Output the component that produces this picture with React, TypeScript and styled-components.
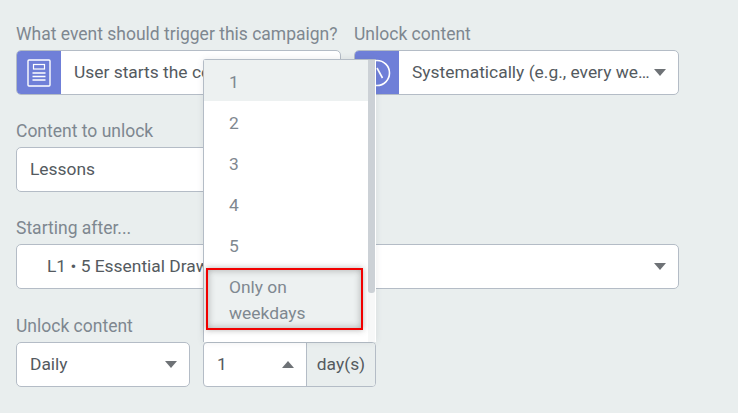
import * as React from 'react';

import styled, { createGlobalStyle } from 'styled-components';

const borderColor = '#b4bcc6';
const indigo = '#6f7fd8';
const textColor = '#545a60';
const labelColor = '#7e8790';

const GlobalStyle = createGlobalStyle`
	html, body {
		margin: 0;
		padding: 0;
		background: #e9eeee;
	}
	body {
		font-family: Roboto, "Liberation Sans", sans-serif;
	}
`;

const Page = styled.div`
	position: relative;
	width: 738px;
	height: 413px;
	overflow: hidden;
	box-sizing: border-box;
	padding: 25px 59px 0 16px;
	display: flex;
	flex-direction: column;
	gap: 27px;
	background: #e9eeee;
`;
const Row = styled.div`
	display: flex;
	gap: 13px;
`;
const LastRow = styled(Row)`
	margin-top: 1px;
`;
const Field = styled.div<{ $width?: number }>`
	display: flex;
	flex-direction: column;
	flex: ${(props) => (props.$width ? `0 0 ${props.$width}px` : '1 1 0')};
	min-width: 0;
	gap: 6px;
`;
const Label = styled.div`
	font-size: 17.5px;
	line-height: 19px;
	height: 19px;
	color: ${labelColor};
	white-space: nowrap;
`;
const Control = styled.div`
	display: flex;
	align-items: stretch;
	height: 45px;
	box-sizing: border-box;
	border: 1px solid ${borderColor};
	border-radius: 5px;
	background: #fff;
	overflow: hidden;
`;
const IconCell = styled.div`
	flex: 0 0 45px;
	margin: -1px 0 -1px -1px;
	display: flex;
	align-items: center;
	justify-content: center;
	background: ${indigo};
`;
const Value = styled.div<{ $indent?: number }>`
	flex: 1;
	min-width: 0;
	display: flex;
	align-items: center;
	padding-left: ${(props) => props.$indent ?? 13}px;
	padding-bottom: 2px;
	font-size: 17.4px;
	color: ${textColor};
	white-space: nowrap;
	overflow: hidden;
`;
const Caret = styled.div<{ $up?: boolean }>`
	flex: 0 0 auto;
	align-self: center;
	margin-right: 12px;
	width: 0;
	height: 0;
	border-left: 6px solid transparent;
	border-right: 6px solid transparent;
	border-top: ${(props) => (props.$up ? '0' : '7px solid #6e7276')};
	border-bottom: ${(props) => (props.$up ? '7px solid #6e7276' : '0')};
`;
const NumberGroup = styled.div`
	display: flex;
	width: 173px;
	height: 45px;
	box-sizing: border-box;
	margin-top: 25px;
	border: 1px solid ${borderColor};
	border-radius: 4px;
	background: #fff;
	overflow: hidden;
`;
const NumberValue = styled.div`
	flex: 1;
	display: flex;
	align-items: center;
	padding-left: 13px;
	padding-bottom: 2px;
	font-size: 17.4px;
	color: ${textColor};
`;
const Addon = styled.div`
	flex: 0 0 69px;
	box-sizing: border-box;
	display: flex;
	align-items: center;
	justify-content: center;
	padding-bottom: 2px;
	border-left: 1px solid ${borderColor};
	background: #e9eeee;
	font-size: 17.4px;
	color: ${textColor};
`;

const Menu = styled.div`
	position: absolute;
	left: 203px;
	top: 59px;
	width: 173px;
	height: 283px;
	box-sizing: border-box;
	border-left: 1px solid ${borderColor};
	border-top: 1px solid ${borderColor};
	border-radius: 3px 0 0 0;
	background: #fff;
	display: flex;
	box-shadow: 0 0 6px rgba(90, 100, 110, 0.12);
`;
const MenuList = styled.div`
	flex: 1;
	min-width: 0;
`;
const MenuItem = styled.div<{ $active?: boolean }>`
	box-sizing: border-box;
	height: 41px;
	padding: 9px 25px 0;
	font-size: 17.4px;
	line-height: 26px;
	color: #7f8890;
	background: ${(props) => (props.$active ? '#edf1f1' : '#fff')};
`;
/* the red frame sits behind the label, so it is drawn by the item itself */
const MenuItemMarked = styled(MenuItem)`
	position: relative;
	isolation: isolate;
	height: 66px;

	&::before {
		content: '';
		position: absolute;
		z-index: -1;
		left: 2px;
		top: 3px;
		width: 157px;
		height: 62px;
		box-sizing: border-box;
		border: 2px solid #f10000;
		background: #edf1f1;
		box-shadow:
			0 0 6px rgba(70, 70, 70, 0.4),
			inset 0 0 7px rgba(70, 70, 70, 0.4);
	}
`;
const Track = styled.div`
	flex: 0 0 7px;
	margin-right: 1px;
	background: #f7f8f8;
`;
const Thumb = styled.div`
	width: 100%;
	height: 233px;
	background: #ccd1d6;
	border-radius: 0 0 3px 3px;
`;

function App() {
	return (
		<Page>
			<GlobalStyle />
			<Row>
				<Field>
					<Label>What event should trigger this campaign?</Label>
					<Control>
						<IconCell>
							<svg width="24" height="28" viewBox="0 0 24 28" fill="none" stroke="#fff">
								<rect x="1" y="1" width="22" height="26" rx="1" strokeWidth="1.4" />
								<rect x="6.5" y="5.5" width="11" height="4.5" strokeWidth="1.2" />
								<path d="M5.5 14h13M5.5 17.5h13M5.5 21h13" strokeWidth="1.4" />
							</svg>
						</IconCell>
						<Value>User starts the course</Value>
					</Control>
				</Field>
				<Field>
					<Label>Unlock content</Label>
					<Control>
						<IconCell>
							<svg width="28" height="28" viewBox="0 0 28 28" fill="none" stroke="#fff" strokeWidth="1.6">
								<circle cx="14" cy="14" r="12.5" />
								<path d="M14 9l5.5 10" />
							</svg>
						</IconCell>
						<Value>Systematically (e.g., every we…</Value>
						<Caret />
					</Control>
				</Field>
			</Row>
			<Row>
				<Field $width={325}>
					<Label>Content to unlock</Label>
					<Control>
						<Value>Lessons</Value>
					</Control>
				</Field>
			</Row>
			<Row>
				<Field>
					<Label>Starting after...</Label>
					<Control>
						<Value $indent={30}>L1 • 5 Essential Drawing Techniques</Value>
						<Caret />
					</Control>
				</Field>
			</Row>
			<LastRow>
				<Field $width={174}>
					<Label>Unlock content</Label>
					<Control>
						<Value>Daily</Value>
						<Caret />
					</Control>
				</Field>
				<NumberGroup>
					<NumberValue>1</NumberValue>
					<Caret $up />
					<Addon>day(s)</Addon>
				</NumberGroup>
			</LastRow>
			<Menu>
				<MenuList>
					<MenuItem $active>1</MenuItem>
					<MenuItem>2</MenuItem>
					<MenuItem>3</MenuItem>
					<MenuItem>4</MenuItem>
					<MenuItem>5</MenuItem>
					<MenuItemMarked>Only on weekdays</MenuItemMarked>
				</MenuList>
				<Track>
					<Thumb />
				</Track>
			</Menu>
		</Page>
	);
}

export default App;
